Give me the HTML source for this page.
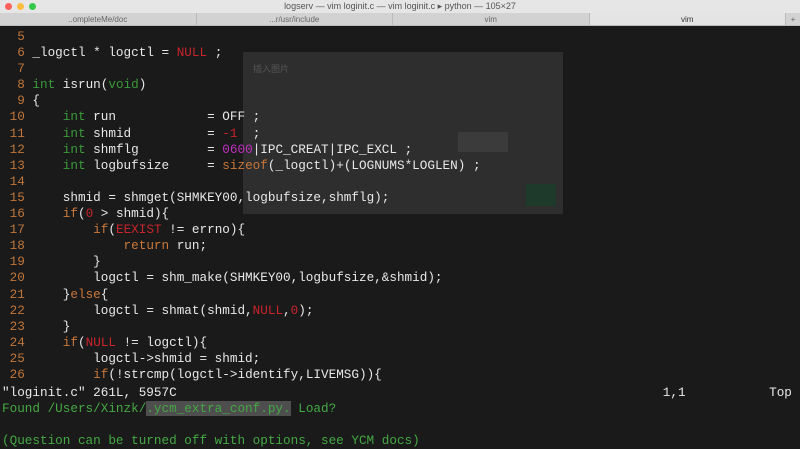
<!DOCTYPE html>
<html><head><meta charset="utf-8"><style>
*{margin:0;padding:0;box-sizing:border-box}
body{width:800px;height:449px;overflow:hidden;background:#1a1a1a;position:relative;font-family:"Liberation Mono",monospace}
#title{position:absolute;left:0;top:0;width:800px;height:13px;background:#e6e6e6;font:9px "Liberation Sans",sans-serif;color:#555;text-align:center;line-height:13px}
.dot{position:absolute;top:3px;width:7px;height:7px;border-radius:50%}
#tabs{position:absolute;left:0;top:13px;width:800px;height:13px;background:#d2d2d2;display:flex;font:8px "Liberation Sans",sans-serif;color:#666;line-height:13px;border-bottom:1px solid #bbb}
#tabs div{flex:1;text-align:center;border-right:1px solid #bbb}
.code{position:absolute;left:2px;font-size:12.67px;line-height:16.1px;color:#e8e8e8;white-space:pre}
.n{color:#c0763a}.g{color:#3a9a3a}.r{color:#c8242c}.m{color:#c030c0}.o{color:#c9783a}.gr{color:#44a844}
.hl{background:#4e4e4e;color:#44a844}
#dlg{position:absolute;left:243px;top:52px;width:320px;height:162px;background:rgba(70,70,70,0.45)}
</style></head><body>
<div id="title"><span class="dot" style="left:5px;background:#fc605b"></span><span class="dot" style="left:17px;background:#fdbc40"></span><span class="dot" style="left:29px;background:#34c84a"></span>logserv — vim loginit.c — vim loginit.c ▸ python — 105×27</div>
<div id="tabs"><div>..ompleteMe/doc</div><div>...r/usr/include</div><div>vim</div><div style="background:#e4e4e4;color:#333">vim</div><div style="flex:0 0 14px;border:none">+</div></div>
<div id="dlg">
<div style="position:absolute;left:10px;top:10px;font:9px 'Liberation Sans','Noto Sans CJK SC',sans-serif;color:#555">插入图片</div>
<div style="position:absolute;left:215px;top:80px;width:50px;height:20px;background:rgba(80,80,80,.4)"></div>
<div style="position:absolute;left:283px;top:132px;width:30px;height:22px;background:#1d3a2a"></div>
</div>
<div class="code" style="top:29px"><span class="n">  5 </span>
<span class="n">  6 </span>_logctl * logctl = <span class="r">NULL</span> ;
<span class="n">  7 </span>
<span class="n">  8 </span><span class="g">int</span> isrun(<span class="g">void</span>)
<span class="n">  9 </span>{
<span class="n"> 10 </span>    <span class="g">int</span> run            = OFF ;
<span class="n"> 11 </span>    <span class="g">int</span> shmid          = <span class="r">-1</span>  ;
<span class="n"> 12 </span>    <span class="g">int</span> shmflg         = <span class="m">0600</span>|IPC_CREAT|IPC_EXCL ;
<span class="n"> 13 </span>    <span class="g">int</span> logbufsize     = <span class="o">sizeof</span>(_logctl)+(LOGNUMS*LOGLEN) ;
<span class="n"> 14 </span>
<span class="n"> 15 </span>    shmid = shmget(SHMKEY00,logbufsize,shmflg);
<span class="n"> 16 </span>    <span class="o">if</span>(<span class="r">0</span> &gt; shmid){
<span class="n"> 17 </span>        <span class="o">if</span>(<span class="r">EEXIST</span> != errno){
<span class="n"> 18 </span>            <span class="o">return</span> run;
<span class="n"> 19 </span>        }
<span class="n"> 20 </span>        logctl = shm_make(SHMKEY00,logbufsize,&amp;shmid);
<span class="n"> 21 </span>    }<span class="o">else</span>{
<span class="n"> 22 </span>        logctl = shmat(shmid,<span class="r">NULL</span>,<span class="r">0</span>);
<span class="n"> 23 </span>    }
<span class="n"> 24 </span>    <span class="o">if</span>(<span class="r">NULL</span> != logctl){
<span class="n"> 25 </span>        logctl-&gt;shmid = shmid;
<span class="n"> 26 </span>        <span class="o">if</span>(!strcmp(logctl-&gt;identify,LIVEMSG)){</div>
<div class="code" style="top:385px">"loginit.c" 261L, 5957C                                                                1,1           Top
<span class="gr">Found /Users/Xinzk/</span><span class="hl">.ycm_extra_conf.py.</span><span class="gr"> Load?</span>

<span class="gr">(Question can be turned off with options, see YCM docs)</span></div>
</body></html>
